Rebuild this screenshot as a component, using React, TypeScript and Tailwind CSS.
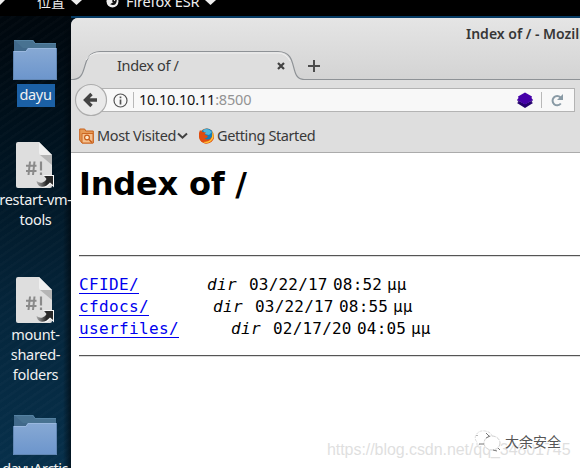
import React from "react";

const uiFont = "font-['Noto_Sans','Noto_Sans_CJK_SC',sans-serif]";

function Folder({ id }: { id: string }) {
  return (
    <svg width="46" height="40" viewBox="0 0 46 40" className="block shrink-0">
      <defs>
        <linearGradient id={id} x1="0" y1="0" x2="0" y2="1">
          <stop offset="0" stopColor="#87a9d4" />
          <stop offset="1" stopColor="#6c95cc" />
        </linearGradient>
      </defs>
      <path d="M2 0h19l2 3h21v17H2z" fill="#41698a" />
      <path d="M2 0l9 8h33V3H23l-2-3z" fill="#487291" />
      <path d="M2 .5h19l2 3h21" fill="none" stroke="#5582a2" />
      <path d="M1 11h13l2-3h29v32H1z" fill={`url(#${id})`} />
      <path d="M1 11.5h13l2-3h29" fill="none" stroke="#9ab8df" />
      <path d="M1.5 11v28.5h43V8" fill="none" stroke="#6287b4" />
    </svg>
  );
}

function ScriptFile() {
  return (
    <svg width="40" height="47" viewBox="0 0 40 47" className="block shrink-0">
      <path d="M3 0h21l13 13v31q0 2-2 2H3q-2 0-2-2V2q0-2 2-2z" fill="#dedede" />
      <path d="M25 13h12v10z" fill="#b5b5b5" />
      <path d="M24 0v11q0 2 2 2h11z" fill="#f0f0f0" />
      <path d="M15 19.5l-1.5 13.500M19.500 19.500l-1.500 13.500M11 23.800h10.500M11 29h10.500" stroke="#8a8a8a" strokeWidth="2" />
      <path d="M26 19.500v9M26 30.500v2.500" stroke="#8a8a8a" strokeWidth="2.200" />
      <defs>
        <linearGradient id="shortcut-tail" x1="0" y1="0" x2="1" y2="0">
          <stop offset="0" stopColor="#aaa" />
          <stop offset="0.6" stopColor="#292929" />
        </linearGradient>
      </defs>
      <path d="M28 33h11v12.500l-3.500-3.500q-3 4-9 3.500l6-7z" fill="#f7f7f7" />
      <path d="M29 34h9v9l-3-2.500q-4 4.500-8 4.200-5-.5-5.500-5.700 3 2.500 6 1.500 3-.9 4-3.500z" fill="url(#shortcut-tail)" />
    </svg>
  );
}

function Desktop() {
  return (
    <aside className="relative w-[71px] shrink-0 overflow-hidden bg-[linear-gradient(180deg,#00070d_0%,#001320_30%,#05263c_66%,#07304b_100%)] text-[14.500px] leading-5 text-[#f1f1f1]">
      <div className="absolute inset-0 bg-[repeating-linear-gradient(145deg,#ffffff04_0px,#ffffff04_2px,transparent_3px,transparent_7px)]" />
      <div className="absolute inset-y-0 right-0 w-2 bg-linear-to-r from-transparent to-[#00070daa]" />
      <div className="relative -ml-[15px] flex w-[100px] flex-col items-center pt-6">
        <Folder id="folder-home" />
        <span className="mt-1 ml-[1px] flex h-[23px] w-[38px] items-center justify-center bg-[#1b60a5] pb-[3px] tracking-[-0.300px]">dayu</span>
        <div className="h-[35px]" />
        <ScriptFile />
        <span className="ml-[1px] text-center tracking-[-0.300px]">restart-vm-<br />tools</span>
        <div className="h-[48px]" />
        <ScriptFile />
        <span className="ml-[1px] text-center tracking-[-0.300px]">mount-<br />shared-<br />folders</span>
        <div className="h-[31px]" />
        <Folder id="folder-arctic" />
        <span className="mt-[3px] whitespace-nowrap tracking-[-0.600px]">dayuArctic</span>
      </div>
    </aside>
  );
}

function TabStrip() {
  return (
    <div className="relative h-[62px] bg-linear-to-b from-[#e5e5e5] to-[#d3d3d3]">
      <svg width="509" height="62" viewBox="0 0 509 62" className="absolute inset-0">
        <path d="M0 61.5H2C19 61 8 34 29 33.5H207C229 34 217 61 233 61.5H509V62H0z" fill="#dedede" />
        <path d="M0 61.5H2C19 61 8 34 29 33.5H207C229 34 217 61 233 61.5H509" fill="none" stroke="#8e9296" strokeWidth="1.2" />
        <path d="M15 42q4-7 14-7H207q8 0 12 8" fill="none" stroke="#f0f0f0" />
        <path d="M207 45l6 6m0-6l-6 6" stroke="#424242" strokeWidth="2.2" />
        <path d="M237 48h12m-6-6v12" stroke="#4c4c4c" strokeWidth="2" />
      </svg>
      <div className="relative flex h-[31px] justify-end whitespace-nowrap pt-[6px] text-[14px] leading-5 font-semibold text-[#363636]">
        <span className="w-[114px]">Index of / - Mozilla Firefox</span>
      </div>
      <div className="relative pl-[46px] pt-[6px] text-[14.500px] leading-5 tracking-[-0.350px] text-[#393939]">Index of /</div>
    </div>
  );
}

function AddressBar() {
  return (
    <div className="relative h-[40px]">
      <div className="ml-[20px] mr-[5px] flex h-full items-center">
        <div className="flex h-[24px] w-full items-center border border-[#b3b3b3] bg-[#f8f8f8] pl-[21px]">
          <svg width="15" height="15" viewBox="0 0 15 15">
            <circle cx="7.5" cy="7.5" r="6.5" fill="none" stroke="#555" strokeWidth="1.2" />
            <path d="M7.5 6.5v5M7.5 3.5v1.7" stroke="#555" strokeWidth="1.7" />
          </svg>
          <div className="ml-[5px] h-4 w-px bg-[#b8b8b8]" />
          <span className="relative -top-px ml-[5px] text-[14.500px] leading-5 tracking-[-0.170px] text-[#111]">10.10.10.11<span className="text-[#939393]">:8500</span></span>
          <svg className="ml-auto" width="16" height="16" viewBox="0 0 16 16">
            <path d="M0 8l1.5 2L0 11l8 5 8-5-1.500-1L16 8l-8 4z" fill="#24006e" />
            <path d="M8 .5l7 4-.5 1.500L16 8l-8 4.500L0 8l1.500-2L1 4.500z" fill="#4500a8" />
          </svg>
          <div className="ml-2 h-4 w-px bg-[#b8b8b8]" />
          <svg className="mr-[10px] ml-[9px]" width="13" height="14" viewBox="0 0 13 14">
            <path d="M9.5 4.5A4.6 4.6 0 1 0 9.8 10.5" fill="none" stroke="#899aa5" strokeWidth="2" />
            <path d="M12 1v6H6z" fill="#899aa5" />
          </svg>
        </div>
      </div>
      <svg width="34" height="34" viewBox="0 0 34 34" className="absolute left-[3px] top-[3px]">
        <circle cx="17" cy="17" r="15.5" fill="#e9e9e9" stroke="#adadad" strokeWidth="1.2" />
        <path d="M17.5 11l-6 6 6 6M12 17h11" fill="none" stroke="#444" strokeWidth="3.4" />
      </svg>
    </div>
  );
}

function Bookmarks() {
  return (
    <div className="flex h-[33px] items-center border-b border-[#ababab] pl-2 text-[14.500px] leading-5 text-[#393939]">
      <svg width="15" height="16" viewBox="0 0 15 16">
        <path d="M.7 1h5l1 2h7.6v12H3L.7 12z" fill="#e69a56" stroke="#c9631d" />
        <path d="M3 5.5h11V15H3z" fill="#f5c18f" stroke="#cc6722" />
        <circle cx="8" cy="9.5" r="2.4" fill="#ffe6c7" stroke="#c85d17" strokeWidth="1.2" />
        <path d="M10 11.5l3 3" stroke="#c85d17" strokeWidth="1.5" />
      </svg>
      <span className="ml-[3px] w-[80px] whitespace-nowrap pb-[2px] tracking-[-0.350px]">Most Visited</span>
      <svg width="11" height="8" viewBox="0 0 11 8"><path d="M1 1.5l4.5 4.2L10 1.5" fill="none" stroke="#414141" strokeWidth="2" /></svg>
      <svg className="ml-[10px]" width="17" height="17" viewBox="0 0 17 17">
        <circle cx="8.500" cy="8" r="7.500" fill="#e66b0b" />
        <circle cx="9" cy="6.500" r="6" fill="#167db8" />
        <path d="M5 2q5-3 9 2l-3 3-4-1z" fill="#52b7dc" />
        <path d="M1 5l1-3 2 2 4 .5-1.500 2L10 8q-1 3-4 2 4 3 7 0 2-2 1-5 3 4 1 7-3 4-8 3.500Q0 14 1 5z" fill="#df4c10" />
        <path d="M14 3q4 7-2 11-4 2-7 0 6 0 8-3 2-3 1-8z" fill="#ffc43a" />
      </svg>
      <span className="ml-[2px] whitespace-nowrap pb-[2px] tracking-[-0.400px]">Getting Started</span>
    </div>
  );
}

function Entry({ name, gap, date, time }: { name: string; gap: string; date: string; time: string }) {
  return (
    <div className="flex h-[22px] whitespace-nowrap">
      <a className="text-[#0000ee] underline decoration-1 underline-offset-[3px]" href="#">{name}</a>
      <span className={`${gap} w-[42px] italic`}>dir</span>
      <span className="w-[84px] tracking-[0.200px]">{date}</span>
      <span className="w-[54px] tracking-[0.200px]">{time}</span>
      <span className="tracking-[0.100px]">µµ</span>
    </div>
  );
}

function DirectoryPage() {
  return (
    <main className="relative h-[315px] bg-white pl-2 text-black">
      <h1 className="h-[102px] pt-[11px] font-['DejaVu_Sans',sans-serif] text-[32px] leading-10 font-bold tracking-[-0.200px]">Index of /</h1>
      <div className="h-[2px] border-t border-[#555] bg-[#ddd]" />
      <div className="h-[98px] pt-[17px] font-['DejaVu_Sans_Mono',monospace] text-[16px] leading-[22px] tracking-[0.367px]">
        <Entry name="CFIDE/" gap="ml-[68px]" date="03/22/17" time="08:52" />
        <Entry name="cfdocs/" gap="ml-[64px]" date="03/22/17" time="08:55" />
        <Entry name="userfiles/" gap="ml-[52px]" date="02/17/20" time="04:05" />
      </div>
      <div className="h-[2px] border-t border-[#555] bg-[#ddd]" />
      <div className="absolute left-[256px] top-[287px] whitespace-nowrap font-['Liberation_Sans',sans-serif] text-[16px] leading-5 tracking-[-0.060px] text-[#dfdfdf]">https://blog.csdn.net/qq_34801745</div>
      <div className="absolute left-[403px] top-[277px] flex items-center">
        <svg width="28" height="22" viewBox="0 0 28 22">
          <path d="M6 14l-3 2v-4Q0 9 2 5q3-5 9-4 6 1 7 5" fill="#fff" stroke="#ddd" strokeDasharray="3 1" />
          <ellipse cx="18" cy="13" rx="8" ry="7" fill="#fff" stroke="#d0d0d0" strokeDasharray="4 1" />
          <path d="M5 14h5M19 20l4 1M24 18l2 2M3 5v1m9-3l3 3M12 8l4-2" stroke="#777" />
        </svg>
        <span className="ml-[3px] font-['Noto_Sans_CJK_SC',sans-serif] text-[14px] leading-5 text-[#555] [text-shadow:-1px_-1px_white,1px_1px_white]">大余安全</span>
      </div>
    </main>
  );
}

export default function App() {
  return (
    <div className={`${uiFont} h-[468px] w-[580px] overflow-hidden bg-black`}>
      <header className="relative flex h-4 items-start overflow-hidden bg-black text-[14.500px] leading-5 text-[#eee]">
        <svg width="6" height="8" className="shrink-0"><path d="M-5 0H5L0 5z" fill="#eee" /></svg>
        <span className="-mt-[8px] ml-[31px] w-[34px] whitespace-nowrap text-[14px]">位置</span>
        <svg width="11" height="6" viewBox="0 0 11 6"><path d="M0 0h11L5.5 5z" fill="#eee" /></svg>
        <svg className="-mt-[5px] ml-[24px]" width="13" height="13" viewBox="0 0 13 13">
          <circle cx="6.5" cy="6.5" r="6" fill="#eee" />
          <path d="M3 3l2 1 3-1-1 3 2 1-3 2q4 1 4-4" fill="none" stroke="#111" strokeWidth="1.6" />
        </svg>
        <span className="-mt-[9px] ml-[7px] w-[79px] whitespace-nowrap tracking-[-0.150px]">Firefox ESR</span>
        <svg width="11" height="6" viewBox="0 0 11 6"><path d="M0 0h11L5.5 5z" fill="#eee" /></svg>
      </header>
      <div className="flex h-[452px] bg-[#000c15]">
        <Desktop />
        <section className="min-w-0 flex-1 border-t-2 border-[#063b64]">
          <div className="overflow-hidden rounded-tl-[7px] bg-[#dedede]">
            <TabStrip />
            <AddressBar />
            <Bookmarks />
            <DirectoryPage />
          </div>
        </section>
      </div>
    </div>
  );
}
